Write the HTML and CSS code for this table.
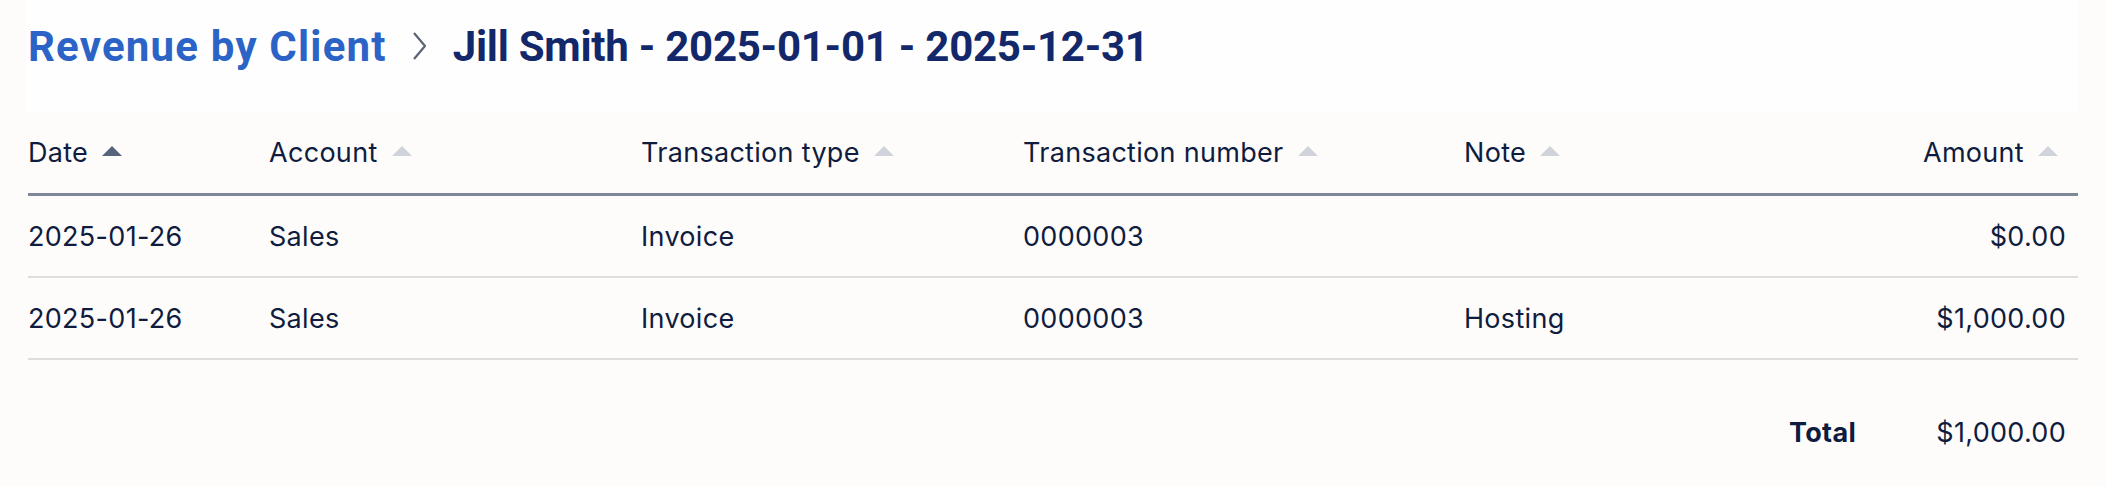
FILE: index.html
```html
<!DOCTYPE html>
<html lang="en">
<head>
<meta charset="utf-8">
<title>Revenue by Client</title>
<link rel="stylesheet" href="styles.css">
</head>
<body>
<header class="page-header">
  <nav class="crumbs">
    <a class="crumb-link" href="#">Revenue by Client</a>
    <svg class="crumb-sep" width="18" height="30" viewBox="0 0 18 30" aria-hidden="true"><path d="M3 2 L14 15 L3 28" fill="none" stroke="#5b6275" stroke-width="2.2" stroke-linejoin="round"/></svg>
    <span class="crumb-current">Jill Smith - 2025-01-01 - 2025-12-31</span>
  </nav>
</header>
<main class="report">
  <table class="ledger">
    <colgroup>
      <col class="c-date"><col class="c-account"><col class="c-type"><col class="c-number"><col class="c-note"><col class="c-amount">
    </colgroup>
    <thead>
      <tr>
        <th><span class="th-in">Date<i class="sort sort-active"></i></span></th>
        <th><span class="th-in">Account<i class="sort"></i></span></th>
        <th><span class="th-in">Transaction type<i class="sort"></i></span></th>
        <th><span class="th-in">Transaction number<i class="sort"></i></span></th>
        <th><span class="th-in">Note<i class="sort"></i></span></th>
        <th class="num"><span class="th-in">Amount<i class="sort"></i></span></th>
      </tr>
    </thead>
    <tbody>
      <tr>
        <td>2025-01-26</td><td>Sales</td><td>Invoice</td><td>0000003</td><td></td><td class="num">$0.00</td>
      </tr>
      <tr>
        <td>2025-01-26</td><td>Sales</td><td>Invoice</td><td>0000003</td><td>Hosting</td><td class="num">$1,000.00</td>
      </tr>
    </tbody>
  </table>
  <div class="total-row">
    <span class="total-label">Total</span>
    <span class="total-value">$1,000.00</span>
  </div>
</main>
</body>
</html>
```

FILE: styles.css
```css
html, body {
  margin: 0;
  padding: 0;
  background: #fdfcfa;
}
body {
  font-family: Inter, "Noto Sans", sans-serif;
  color: #0f1c3f;
  width: 2106px;
  height: 486px;
  overflow: hidden;
}
.page-header {
  margin: 0 29px 0 26px;
  height: 112px;
  background: #fefefe;
  box-sizing: border-box;
  padding: 17px 0 0 2px;
}
.crumbs {
  display: flex;
  align-items: center;
  height: 58px;
  font-family: Roboto, "Liberation Sans", sans-serif;
  font-weight: 700;
  font-size: 42px;
}
.crumb-link {
  color: #2b64c6;
  text-decoration: none;
  letter-spacing: 1.2px;
}
.crumb-sep {
  margin: 0 24px 0 24px;
}
.crumb-current {
  color: #13286a;
  letter-spacing: -0.25px;
}
.report {
  padding: 0 28px;
}
.ledger {
  width: 2050px;
  border-collapse: collapse;
  table-layout: fixed;
  font-size: 27px;
  letter-spacing: 0.3px;
}
.c-date { width: 241px; }
.c-account { width: 372px; }
.c-type { width: 382px; }
.c-number { width: 441px; }
.c-note { width: 314px; }
.c-amount { width: 300px; }
.ledger th {
  height: 81px;
  padding: 0;
  text-align: left;
  font-weight: 400;
  border-bottom: 3px solid #7e8898;
  vertical-align: middle;
}
.th-in {
  display: inline-flex;
  align-items: center;
}
.sort {
  display: inline-block;
  width: 0;
  height: 0;
  border-left: 10px solid transparent;
  border-right: 10px solid transparent;
  border-bottom: 10px solid #d0d3da;
  margin-left: 14px;
  margin-top: -3px;
}
.sort-active {
  border-bottom-color: #58647e;
}
.ledger td {
  height: 80px;
  padding: 0;
  border-bottom: 2px solid #dedede;
  vertical-align: middle;
}
.ledger th.num {
  text-align: right;
  padding-right: 20px;
}
.ledger td.num {
  text-align: right;
  padding-right: 12px;
}
.total-row {
  display: flex;
  justify-content: flex-end;
  align-items: center;
  margin-top: 54px;
  height: 36px;
  font-size: 27px;
  letter-spacing: 0.3px;
  padding-right: 12px;
}
.total-label {
  font-weight: 700;
}
.total-value {
  width: 210px;
  text-align: right;
}
```
